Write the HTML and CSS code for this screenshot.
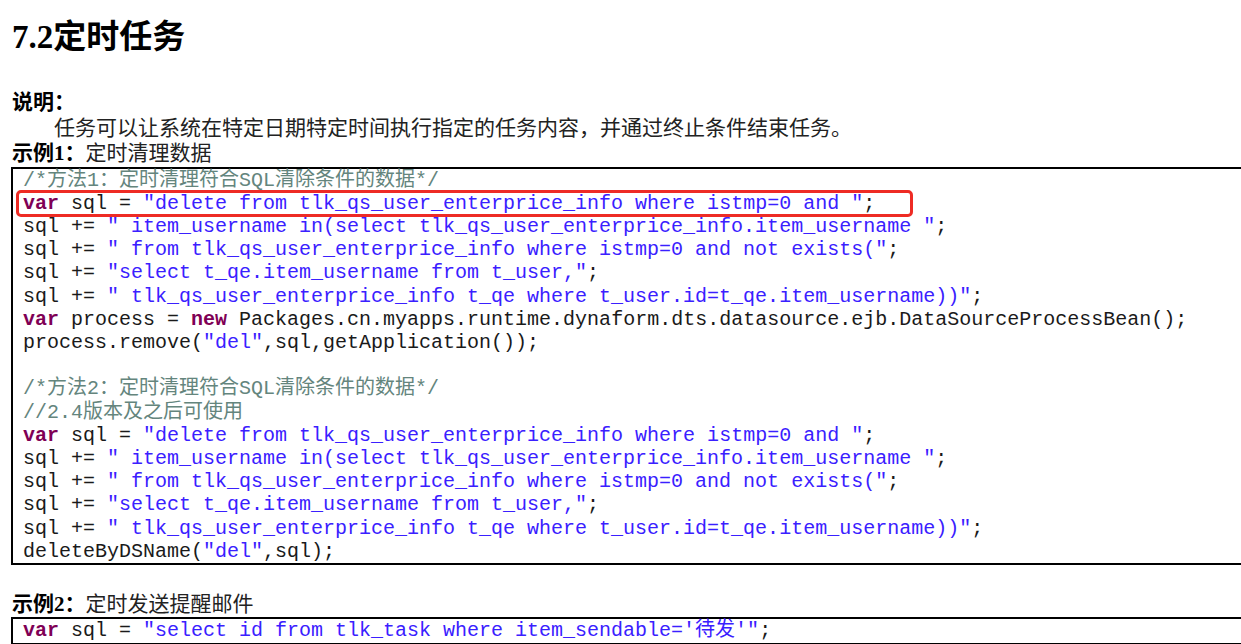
FILE: index.html
```html
<!DOCTYPE html>
<html lang="zh-CN">
<head>
<meta charset="utf-8">
<title>7.2定时任务</title>
<link rel="stylesheet" href="styles.css">
</head>
<body>
<main class="doc">
  <h2 class="title">7.2定时任务</h2>
  <p class="label">说明：</p>
  <p class="desc">任务可以让系统在特定日期特定时间执行指定的任务内容，并通过终止条件结束任务。</p>
  <p class="label">示例1：<span class="plain">定时清理数据</span></p>
  <div class="code">
    <div class="highlight"></div>
<pre><span class="c">/*方法1：定时清理符合SQL清除条件的数据*/</span>
<span class="k">var</span> sql = <span class="s">"delete from tlk_qs_user_enterprice_info where istmp=0 and "</span>;
sql += <span class="s">" item_username in(select tlk_qs_user_enterprice_info.item_username "</span>;
sql += <span class="s">" from tlk_qs_user_enterprice_info where istmp=0 and not exists("</span>;
sql += <span class="s">"select t_qe.item_username from t_user,"</span>;
sql += <span class="s">" tlk_qs_user_enterprice_info t_qe where t_user.id=t_qe.item_username))"</span>;
<span class="k">var</span> process = <span class="k">new</span> Packages.cn.myapps.runtime.dynaform.dts.datasource.ejb.DataSourceProcessBean();
process.remove(<span class="s">"del"</span>,sql,getApplication());

<span class="c">/*方法2：定时清理符合SQL清除条件的数据*/</span>
<span class="c">//2.4版本及之后可使用</span>
<span class="k">var</span> sql = <span class="s">"delete from tlk_qs_user_enterprice_info where istmp=0 and "</span>;
sql += <span class="s">" item_username in(select tlk_qs_user_enterprice_info.item_username "</span>;
sql += <span class="s">" from tlk_qs_user_enterprice_info where istmp=0 and not exists("</span>;
sql += <span class="s">"select t_qe.item_username from t_user,"</span>;
sql += <span class="s">" tlk_qs_user_enterprice_info t_qe where t_user.id=t_qe.item_username))"</span>;
deleteByDSName(<span class="s">"del"</span>,sql);</pre>
  </div>
  <p class="label label-gap">示例2：<span class="plain">定时发送提醒邮件</span></p>
  <div class="code">
<pre><span class="k">var</span> sql = <span class="s">"select id from tlk_task where item_sendable='待发'"</span>;</pre>
  </div>
</main>
</body>
</html>
```

FILE: styles.css
```css
html, body {
  margin: 0;
  padding: 0;
  overflow: hidden;
  background: #ffffff;
}

.doc {
  padding: 17px 0 0 11px;
  font-family: "Liberation Serif", "Noto Sans CJK SC", serif;
  color: #111111;
}

.title {
  margin: 0 0 33px 1px;
  font-size: 33px;
  line-height: 40px;
  font-weight: bold;
  color: #000000;
}

.label {
  margin: 0 0 0 1px;
  font-size: 21px;
  line-height: 25.5px;
  font-weight: bold;
  color: #000000;
}

.label .plain {
  font-weight: normal;
  color: #222222;
}

.label-gap {
  margin-top: 27px;
}

.desc {
  margin: 0 0 0 1px;
  font-size: 21px;
  line-height: 25.5px;
  text-indent: 42px;
  color: #222222;
}

.code {
  position: relative;
  width: calc(100% + 60px);
  border: 2px solid #000000;
  border-right: none;
  box-sizing: border-box;
}

.code pre {
  margin: 0;
  padding: 0 0 0 10px;
  font-family: "Liberation Mono", "Noto Sans CJK SC", monospace;
  font-size: 20px;
  line-height: 23.2px;
  color: #1a1a1a;
}

.code .k {
  color: #7f0055;
  font-weight: bold;
}

.code .s {
  color: #3a20ff;
}

.code .c {
  color: #64857d;
}

.highlight {
  position: absolute;
  left: 3px;
  top: 21px;
  width: 897px;
  height: 27px;
  border: 3px solid #ee2b24;
  border-radius: 5px;
  box-sizing: border-box;
  pointer-events: none;
}
```
